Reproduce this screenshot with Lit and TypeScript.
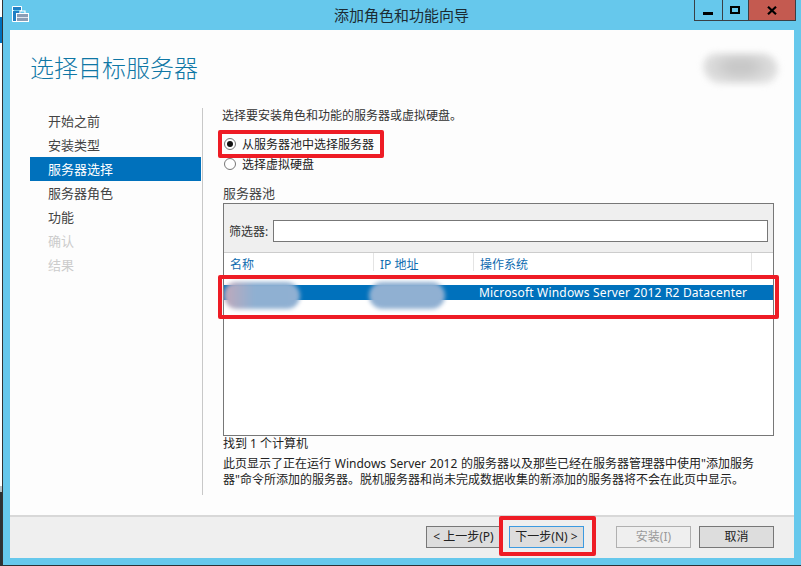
import { LitElement, html, css } from "lit";
import { customElement } from "lit/decorators.js";

const NAV = [
  { t: "开始之前" },
  { t: "安装类型" },
  { t: "服务器选择", sel: true },
  { t: "服务器角色" },
  { t: "功能" },
  { t: "确认", dis: true },
  { t: "结果", dis: true },
];

@customElement("app-root")
export class AppRoot extends LitElement {
  static styles = css`
    :host {
      display: flex;
      position: relative;
      width: 801px;
      height: 566px;
      overflow: hidden;
      font-family: "Noto Sans", "Noto Sans CJK SC", sans-serif;
      font-size: 12px;
      color: #333;
      background: #66c8ec;
    }
    .desk {
      width: 2px;
      flex: none;
      display: flex;
      flex-direction: column;
      border-right: 1px solid #333;
    }
    .desk .a { height: 17px; background: #fff; }
    .desk .b { height: 26px; background: #0071bc; }
    .desk .c { height: 443px; background: #fff; }
    .desk .d { height: 6px; background: #b9c3c7; }
    .desk .e { flex: 1; background: #2d3033; }
    .win {
      flex: 1;
      min-width: 0;
      display: flex;
      flex-direction: column;
      background: #66c8ec;
      border-bottom: 1px solid #2d3033;
    }
    .titlebar {
      height: 30px;
      flex: none;
      display: flex;
      position: relative;
      padding-left: 9px;
    }
    .appicon { margin-top: 6px; width: 17px; height: 16px; }
    .wintitle {
      position: absolute;
      left: 331px;
      top: 5px;
      font-size: 15px;
      line-height: 20px;
      color: #1c2b33;
    }
    .winbtns {
      display: flex;
      margin-left: auto;
      margin-right: 5px;
      height: 21px;
      border: 1px solid #3a3f44;
      border-top: none;
      box-sizing: border-box;
    }
    .winbtn {
      display: flex;
      align-items: center;
      justify-content: center;
      border-left: 1px solid #3a3f44;
    }
    .winbtn:first-child { border-left: none; width: 27px; }
    .winbtn.max { width: 25px; }
    .winbtn.close { width: 46px; background: #c45a50; }
    .client {
      flex: 1;
      margin: 0 7px 7px;
      display: flex;
      flex-direction: column;
      background: #fdfdfd;
      min-height: 0;
    }
    .head {
      height: 78px;
      flex: none;
      padding-left: 20px;
      box-sizing: border-box;
      display: flex;
      align-items: flex-start;
    }
    h1 {
      margin: 21px 0 0;
      font-size: 24px;
      line-height: 34px;
      font-weight: 300;
      color: #0f77a5;
    }
    .body {
      flex: 1;
      display: flex;
      padding: 0 0 20px 20px;
      min-height: 0;
    }
    nav {
      width: 171px;
      flex: none;
      padding-top: 1px;
      margin-right: 1px;
    }
    .item {
      height: 24px;
      line-height: 24px;
      padding-left: 18px;
      font-size: 13px;
      color: #444;
    }
    .item.sel { background: #0071bc; color: #fff; }
    .item.dis { color: #ccc; }
    .content {
      flex: 1;
      min-width: 0;
      border-left: 1px solid #c8c8c8;
      padding-left: 19px;
      padding-right: 20px;
    }
    .line { line-height: 16px; }
    .radio {
      display: flex;
      align-items: center;
      height: 20px;
      padding-left: 2px;
      gap: 6px;
      color: #222;
    }
    .radios { margin-top: 10px; }
    .circle {
      width: 12px;
      height: 12px;
      border: 1px solid #777;
      border-radius: 50%;
      background: #fff;
      display: flex;
      align-items: center;
      justify-content: center;
      box-sizing: border-box;
    }
    .dot { width: 6px; height: 6px; border-radius: 50%; background: #111; }
    .poolhead {
      margin: 10px 0 1px 1px;
      font-size: 13px;
      line-height: 18px;
      color: #444;
    }
    .pool {
      margin-left: 1px;
      width: 551px;
      height: 233px;
      box-sizing: border-box;
      border: 1px solid #777;
      background: #fff;
    }
    .filter {
      height: 49px;
      box-sizing: border-box;
      background: #efefef;
      border-bottom: 1px solid #ccc;
      display: flex;
      align-items: center;
      padding: 5px 5px 0 5px;
      gap: 5px;
      color: #333;
    }
    .input {
      flex: 1;
      height: 22px;
      box-sizing: border-box;
      border: 1px solid #777;
      background: #fff;
    }
    .cols {
      display: flex;
      height: 22px;
      color: #0f6cb0;
      line-height: 24px;
    }
    .col { padding-left: 6px; box-sizing: border-box; border-right: 1px solid #e4e4e4; height: 18px; }
    .col.c1 { width: 150px; }
    .col.c2 { width: 100px; }
    .col.c3 { width: 278px; }
    .row {
      margin-top: 10px;
      height: 15px;
      line-height: 15px;
      background: #0071bc;
      color: #fff;
      padding-left: 255px;
      letter-spacing: 0.18px;
    }
    .found { margin: 0 0 0 1px; line-height: 15px; color: #222; }
    .desc { margin: 5px 0 0 1px; line-height: 16px; color: #222; white-space: nowrap; word-spacing: 0.7px; }
    .foot {
      height: 43px;
      flex: none;
      box-sizing: border-box;
      background: #efefef;
      border-top: 2px solid #d8d8d8;
      display: flex;
      align-items: flex-start;
      padding: 9px 20px 0 0;
      justify-content: flex-end;
    }
    .btn {
      width: 75px;
      height: 22px;
      line-height: 20px;
      text-align: center;
      box-sizing: border-box;
      border: 1px solid #777;
      background: #ddd;
      color: #222;
      margin-left: 8px;
      white-space: nowrap;
    }
    .btn.next { border-color: #3c9ae0; margin-left: 8px; margin-right: 24px; }
    .btn.prev { margin-left: 0; }
    .btn.off { border-color: #b0b0b0; background: #efefef; color: #9a9a9a; }
    .mark {
      position: absolute;
      box-sizing: border-box;
      border: 4px solid #ee1c25;
      border-radius: 2px;
    }
    .m1 { left: 218px; top: 130px; width: 166px; height: 28px; }
    .m2 { left: 218px; top: 275px; width: 561px; height: 44px; }
    .m3 { left: 499px; top: 516px; width: 97px; height: 40px; }
    .blob { position: absolute; filter: blur(2px); }
    .b0 {
      left: 703px; top: 53px; width: 75px; height: 31px;
      background: radial-gradient(ellipse at 50% 45%, #c8c8c8 20%, #e6e6e6 80%);
      filter: blur(3px);
      border-radius: 16px 20px 18px 22px;
    }
    .b1 {
      left: 224px; top: 282px; width: 76px; height: 27px;
      border-radius: 13px 15px 14px 14px;
      background: linear-gradient(90deg, #c0a9bb, #8fb0d2 40%, #90b0d2);
    }
    .b2 {
      left: 369px; top: 282px; width: 76px; height: 27px;
      border-radius: 14px;
      background: #90b0d2;
    }
  `;

  render() {
    return html`
      <div class="desk">
        <div class="a"></div><div class="b"></div><div class="c"></div><div class="d"></div><div class="e"></div>
      </div>
      <div class="win">
        <div class="titlebar">
          <svg class="appicon" viewBox="0 0 17 16">
            <path d="M0.5 0.5H9.5V5M5 15.5H0.5V0.5" fill="#fff" stroke="#fff"/>
            <rect x="1" y="1" width="8" height="3" fill="#1f7fc4"/>
            <rect x="1" y="5" width="8" height="10" fill="#1f7fc4"/>
            <rect x="4" y="7" width="13" height="9" fill="#fff"/>
            <rect x="5" y="8" width="11" height="7" fill="#8a9db5"/>
            <path d="M8 7V5H13V7" fill="none" stroke="#fff" stroke-width="1.2"/>
            <rect x="5" y="11" width="11" height="1" fill="#dfe6ee"/>
          </svg>
          <div class="wintitle">添加角色和功能向导</div>
          <div class="winbtns">
            <div class="winbtn">
              <svg width="11" height="10" viewBox="0 0 11 10"><rect x="0" y="7" width="10" height="3" fill="#000"/></svg>
            </div>
            <div class="winbtn max">
              <svg width="11" height="9" viewBox="0 0 11 9"><rect x="1" y="1" width="8" height="6" fill="none" stroke="#000" stroke-width="2"/></svg>
            </div>
            <div class="winbtn close">
              <svg width="10" height="9" viewBox="0 0 10 9"><path d="M1 0.8L9 8.2M9 0.8L1 8.2" stroke="#000" stroke-width="2.2"/></svg>
            </div>
          </div>
        </div>
        <div class="client">
          <div class="head"><h1>选择目标服务器</h1></div>
          <div class="body">
            <nav>
              ${NAV.map(
                (n) => html`<div class="item ${n.sel ? "sel" : ""} ${n.dis ? "dis" : ""}">${n.t}</div>`
              )}
            </nav>
            <div class="content">
              <div class="line">选择要安装角色和功能的服务器或虚拟硬盘。</div>
              <div class="radios">
                <div class="radio"><span class="circle"><span class="dot"></span></span>从服务器池中选择服务器</div>
                <div class="radio"><span class="circle"></span>选择虚拟硬盘</div>
              </div>
              <div class="poolhead">服务器池</div>
              <div class="pool">
                <div class="filter"><span>筛选器:</span><div class="input"></div></div>
                <div class="cols">
                  <div class="col c1">名称</div>
                  <div class="col c2">IP 地址</div>
                  <div class="col c3">操作系统</div>
                </div>
                <div class="row">Microsoft Windows Server 2012 R2 Datacenter</div>
              </div>
              <div class="found">找到 1 个计算机</div>
              <div class="desc">此页显示了正在运行 Windows Server 2012 的服务器以及那些已经在服务器管理器中使用"添加服务<br />器"命令所添加的服务器。脱机服务器和尚未完成数据收集的新添加的服务器将不会在此页中显示。</div>
            </div>
          </div>
          <div class="foot">
            <div class="btn prev">&lt; 上一步(P)</div>
            <div class="btn next">下一步(N) &gt;</div>
            <div class="btn off">安装(I)</div>
            <div class="btn">取消</div>
          </div>
        </div>
      </div>
      <div class="blob b0"></div>
      <div class="blob b1"></div>
      <div class="blob b2"></div>
      <div class="mark m1"></div>
      <div class="mark m2"></div>
      <div class="mark m3"></div>
    `;
  }
}
